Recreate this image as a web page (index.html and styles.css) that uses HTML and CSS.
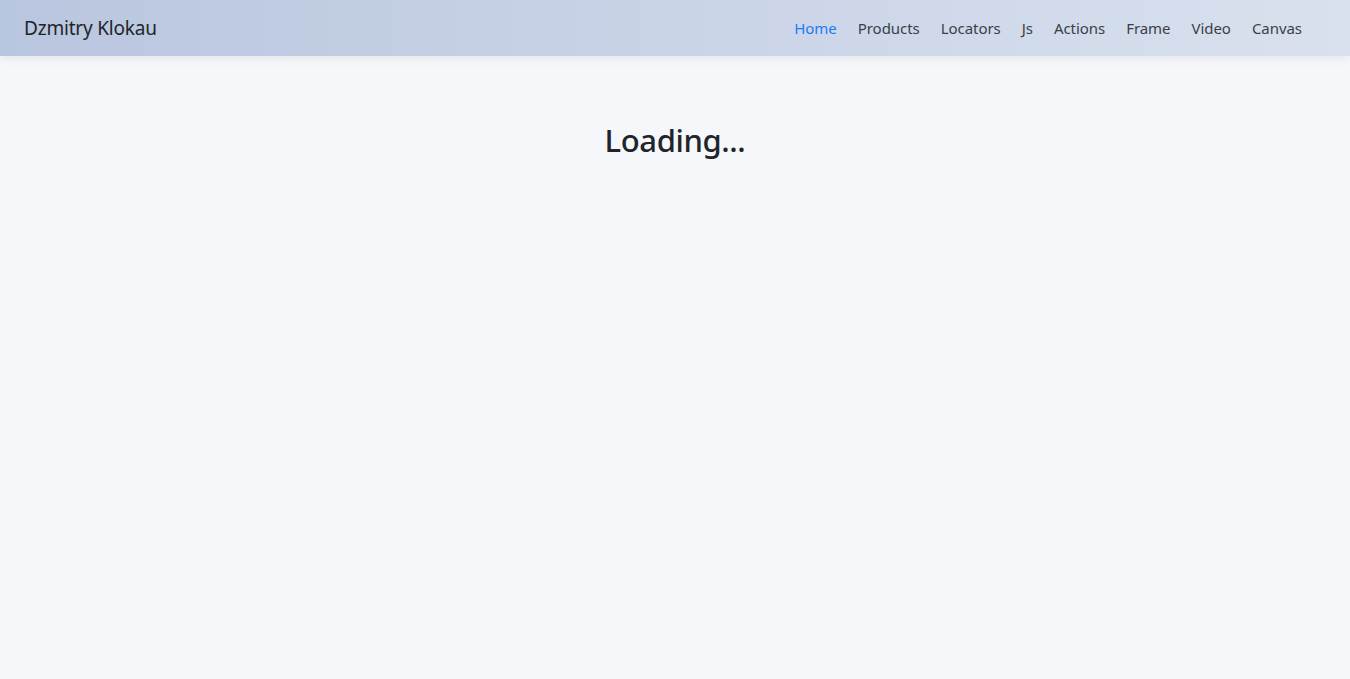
FILE: index.html
```html
<!DOCTYPE html>
<html lang="en">
<head>
<meta charset="utf-8">
<title>Dzmitry Klokau</title>
<link rel="stylesheet" href="styles.css">
</head>
<body>
<nav class="navbar">
  <a class="brand" href="#">Dzmitry Klokau</a>
  <ul class="nav">
    <li><a class="nav-link active" href="#">Home</a></li>
    <li><a class="nav-link" href="#">Products</a></li>
    <li><a class="nav-link" href="#">Locators</a></li>
    <li><a class="nav-link" href="#">Js</a></li>
    <li><a class="nav-link" href="#">Actions</a></li>
    <li><a class="nav-link" href="#">Frame</a></li>
    <li><a class="nav-link" href="#">Video</a></li>
    <li><a class="nav-link" href="#">Canvas</a></li>
  </ul>
</nav>
<main class="content">
  <h2 class="loading">Loading...</h2>
</main>
</body>
</html>
```
FILE: styles.css
```css
* { box-sizing: border-box; }
html, body { margin: 0; padding: 0; }
body {
  background: #f5f7fa;
  color: #212529;
  font-family: "Noto Sans", "Open Sans", sans-serif;
  min-height: 679px;
}
.navbar {
  height: 56px;
  display: flex;
  align-items: center;
  justify-content: space-between;
  padding: 0 40px 0 24px;
  background: linear-gradient(90deg, #b9c6df 0%, #d9e1ee 100%);
  box-shadow: 0 2px 10px rgba(0,0,0,0.08);
  position: relative;
}
.brand {
  font-size: 19px;
  color: #212529;
  text-decoration: none;
  letter-spacing: -0.2px;
}
.nav {
  list-style: none;
  margin: 0;
  padding: 0;
  display: flex;
  gap: 5px;
}
.nav-link {
  display: block;
  padding: 8px 8px;
  font-size: 15px;
  color: #3a3f48;
  text-decoration: none;
  letter-spacing: -0.05px;
}
.nav-link.active { color: #1a7cf5; }
.content {
  padding-top: 66px;
  text-align: center;
}
.loading {
  margin: 0;
  font-size: 31px;
  font-weight: 500;
  line-height: 1.2;
  letter-spacing: -0.4px;
}
```
